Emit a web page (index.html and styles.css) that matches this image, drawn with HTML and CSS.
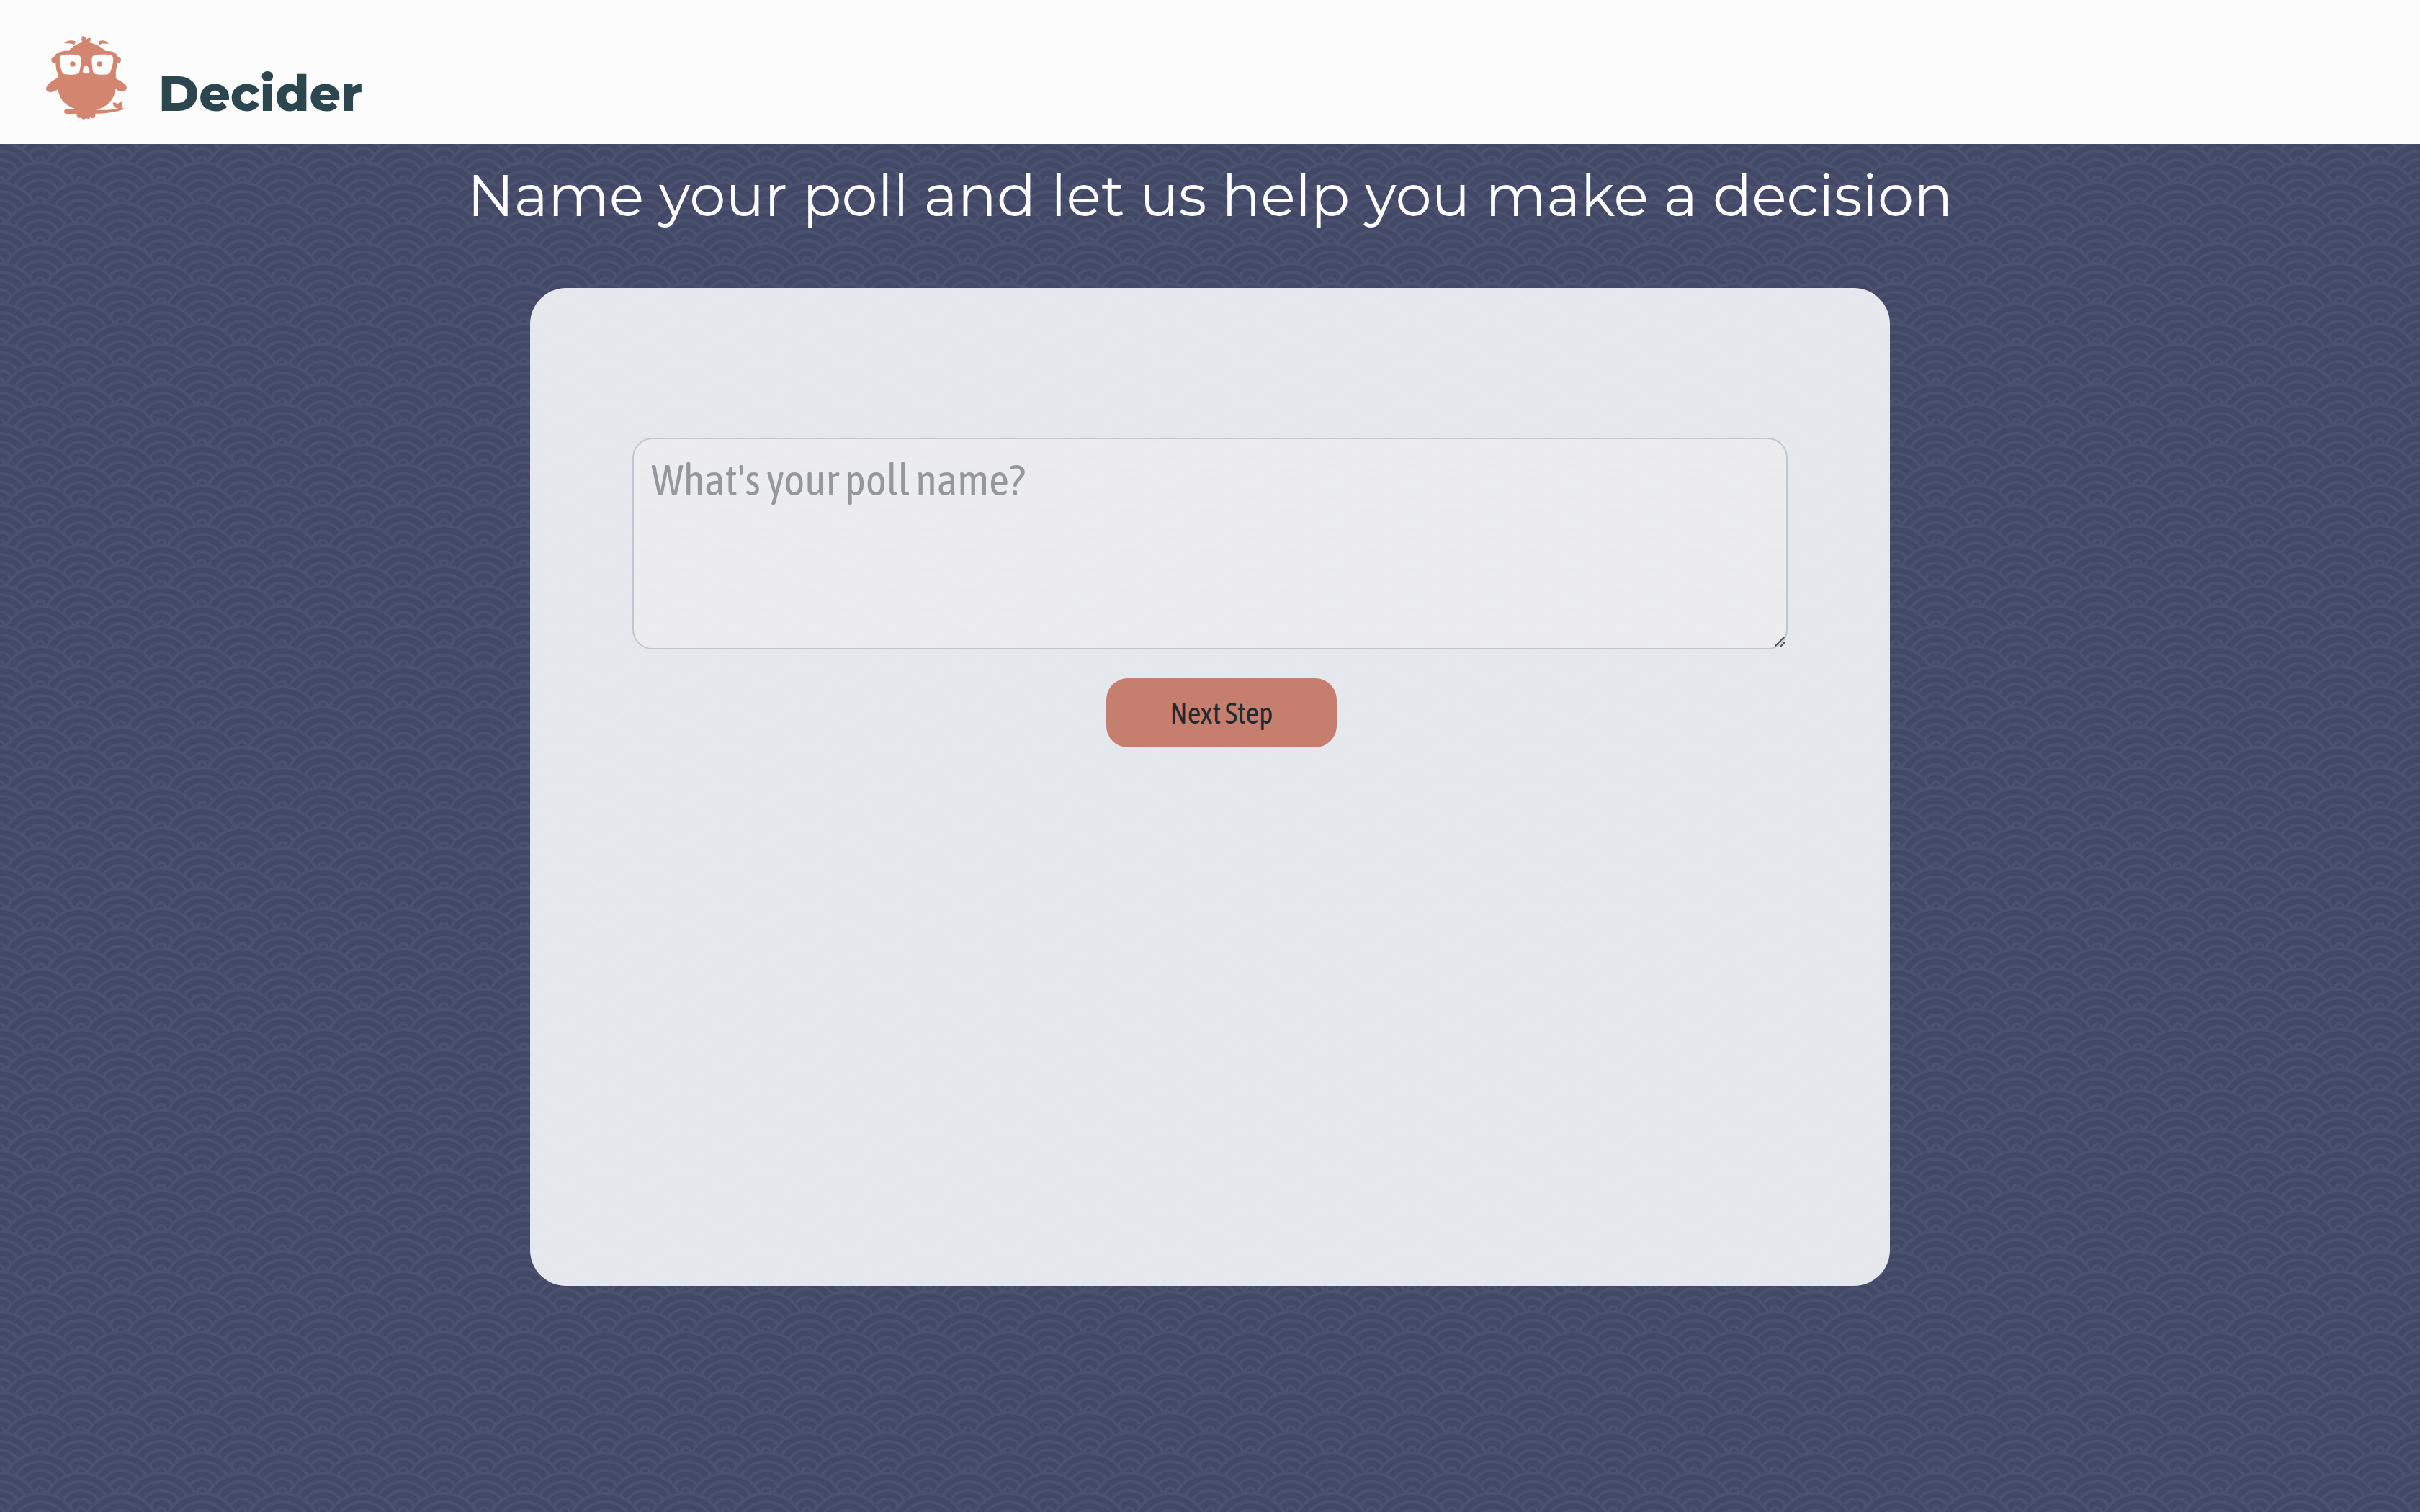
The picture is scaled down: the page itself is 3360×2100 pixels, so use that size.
FILE: index.html
```html
<!DOCTYPE html>
<html lang="en">
<head>
<meta charset="utf-8">
<title>Decider</title>
<link rel="stylesheet" href="styles.css">
</head>
<body>
<header class="site-header">
  <a class="brand" href="/">
    <svg class="brand-logo" viewBox="0 0 420 420" aria-hidden="true">
      <path d="M194 56C188 45 189 34 195 30C204 33 209 38 211 44C216 38 221 37 227 39C228 47 227 53 222 58C250 63 273 76 289 93C312 92 334 96 341 116C352 117 355 123 354 131C352 141 346 145 338 144C336 159 334 171 332 183L333 206C350 218 367 224 376 237C382 253 371 263 356 261C346 260 338 255 331 251C328 291 300 325 249 338C290 340 325 335 343 332C329 331 320 320 320 308C329 307 335 309 340 314C345 308 352 304 359 306C360 318 358 326 355 331C361 329 366 330 366 335C332 346 290 354 247 353C248 364 246 373 237 373C230 373 229 369 228 367C224 379 211 377 209 369C206 380 191 380 188 370C180 375 168 370 170 353L127 356C114 354 114 336 127 334L170 335C130 325 96 297 92 252C79 261 62 267 50 262C38 257 41 241 51 232C64 217 79 212 91 203L92 188C84 176 83 161 82 144C70 145 65 140 64 130C64 121 67 116 76 116C85 96 109 92 137 92C151 74 171 62 194 56Z"/>
      <path d="M119 59C129 48 149 46 162 51C166 56 164 63 158 66C149 60 136 60 119 61ZM301 61C292 49 277 46 264 51C259 56 262 64 266 66C276 60 287 61 301 63Z"/>
      <path class="brand-logo-lens" d="M99 120C101 110 108 107 140 107C174 107 188 110 188 127C187 145 186 159 181 177C178 189 168 191 145 191C122 192 112 190 108 178C101 157 97 135 99 120ZM321 120C319 110 312 107 280 107C246 107 232 110 232 127C233 145 234 159 237 177C240 189 250 191 275 191C298 192 305 190 310 178C319 157 323 135 321 120ZM208 153C216 153 221 165 224 181C218 183 213 187 209 188C203 187 200 182 194 180C197 166 200 154 208 153Z"/>
      <circle cx="153" cy="147" r="11"/>
      <circle cx="265" cy="147" r="11"/>
    </svg>
    <span class="brand-name">Decider</span>
  </a>
</header>
<main class="page">
  <h1 class="page-title">Name your poll and let us help you make a decision</h1>
  <form class="poll-card">
    <textarea class="poll-name" placeholder="What's your poll name?" aria-label="What's your poll name?"></textarea>
    <div class="poll-actions">
      <button class="next-step" type="submit">Next Step</button>
    </div>
  </form>
</main>
</body>
</html>
```
FILE: styles.css
```css
* {
  box-sizing: border-box;
}

body {
  margin: 0;
  min-height: 100vh;
  background-color: #424866;
  background-image: url("data:image/svg+xml,%3Csvg xmlns='http://www.w3.org/2000/svg' width='112' height='56' viewBox='0 0 56 28'%3E%3Cpath fill='%234b5270' d='M56 26v2h-7.75c2.3-1.27 4.94-2 7.75-2zm-26 2a2 2 0 1 0-4 0h-4.09A25.98 25.98 0 0 0 0 16v-2c.67 0 1.34.02 2 .07V14a2 2 0 0 0-2-2v-2a4 4 0 0 1 3.98 3.6 28.09 28.09 0 0 1 2.8-3.86A8 8 0 0 0 0 6V4a9.99 9.99 0 0 1 8.17 4.23c.94-.95 1.96-1.83 3.03-2.63A13.98 13.98 0 0 0 0 0h7.75c2 1.1 3.73 2.63 5.1 4.45 1.12-.72 2.3-1.37 3.53-1.93A20.1 20.1 0 0 0 14.28 0h2.7c.45.56.88 1.14 1.29 1.74 1.3-.48 2.63-.87 4-1.15-.11-.2-.23-.4-.36-.59H26v.07a28.4 28.4 0 0 1 4 0V0h4.09l-.37.59c1.38.28 2.72.67 4.01 1.15.4-.6.84-1.18 1.3-1.74h2.69a20.1 20.1 0 0 0-2.1 2.52c1.23.56 2.41 1.2 3.54 1.93A16.08 16.08 0 0 1 48.25 0H56c-4.58 0-8.65 2.2-11.2 5.6 1.07.8 2.09 1.68 3.03 2.63A9.99 9.99 0 0 1 56 4v2a8 8 0 0 0-6.77 3.74c1.03 1.2 1.97 2.5 2.79 3.86A4 4 0 0 1 56 10v2a2 2 0 0 0-2 2.07 28.4 28.4 0 0 1 2-.07v2c-9.2 0-17.3 4.78-21.91 12H30zM7.75 28H0v-2c2.81 0 5.46.73 7.75 2zM56 20v2c-5.6 0-10.65 2.3-14.28 6h-2.7c4.04-4.89 10.15-8 16.98-8zm-39.03 8h-2.69C10.65 24.3 5.6 22 0 22v-2c6.83 0 12.94 3.11 16.97 8zm15.01-.4a28.09 28.09 0 0 1 2.8-3.86 8 8 0 0 0-13.55 0c1.03 1.2 1.97 2.5 2.79 3.86a4 4 0 0 1 7.96 0zm14.29-11.86c1.3-.48 2.63-.87 4-1.15a25.99 25.99 0 0 0-44.55 0c1.38.28 2.72.67 4.01 1.15a21.98 21.98 0 0 1 36.54 0zm-5.43 2.71c1.13-.72 2.3-1.37 3.54-1.93a19.98 19.98 0 0 0-32.76 0c1.23.56 2.41 1.2 3.54 1.93a15.98 15.98 0 0 1 25.68 0zm-4.67 3.78c.94-.95 1.96-1.83 3.03-2.63a13.98 13.98 0 0 0-22.4 0c1.07.8 2.09 1.68 3.03 2.63a9.99 9.99 0 0 1 16.34 0z'/%3E%3C/svg%3E");
  font-family: "Asap Condensed", Lato, sans-serif;
}

.site-header {
  padding: 40px 50px 20px;
  background: #fcfcfc;
}

.brand {
  display: flex;
  width: fit-content;
  gap: 30px;
  color: #2c464f;
  text-decoration: none;
}

.brand-logo {
  width: 140px;
  height: 140px;
  fill: #d3866f;
}

.brand-logo-lens {
  fill: #fcfcfc;
}

.brand-name {
  padding-top: 50px;
  font: 800 68px/80px Montserrat, Inter, sans-serif;
}

.page {
  padding: 20px 0 40px;
}

.page-title {
  margin: 0;
  padding: 2px 0 78px;
  color: #fcfcfc;
  font: 400 80px/100px Montserrat, Inter, sans-serif;
  text-align: center;
}

.poll-card {
  width: 56.2%;
  min-height: 66vh;
  margin: 0 auto;
  padding: 208px 0;
  border-radius: 50px;
  background: rgba(246, 250, 251, 0.9);
}

.poll-name {
  display: block;
  width: 84.9%;
  height: 294px;
  margin: 0 auto 40px;
  padding: 22px 24px;
  border: 2px solid #c0c5ce;
  border-radius: 28px;
  background: rgba(240, 238, 241, 0.7);
  color: #24292f;
  font: inherit;
  font-size: 61px;
  line-height: 68px;
}

.poll-name::placeholder {
  color: #94979c;
  opacity: 1;
}

.poll-name::-webkit-scrollbar {
  width: 22px;
  height: 22px;
}

.poll-name::-webkit-resizer {
  background: url("data:image/svg+xml,%3Csvg xmlns='http://www.w3.org/2000/svg' width='22' height='22'%3E%3Cpath d='M6 20L20 6M14 20l6-6' stroke='%234c4f54' stroke-width='2'/%3E%3C/svg%3E") no-repeat right bottom;
}

.poll-actions {
  display: flex;
  justify-content: center;
  padding-left: 32px;
}

.next-step {
  width: 320px;
  height: 96px;
  border: 0;
  border-radius: 30px;
  background: #c67f6f;
  color: #24292f;
  font: inherit;
  font-size: 41px;
}
```
